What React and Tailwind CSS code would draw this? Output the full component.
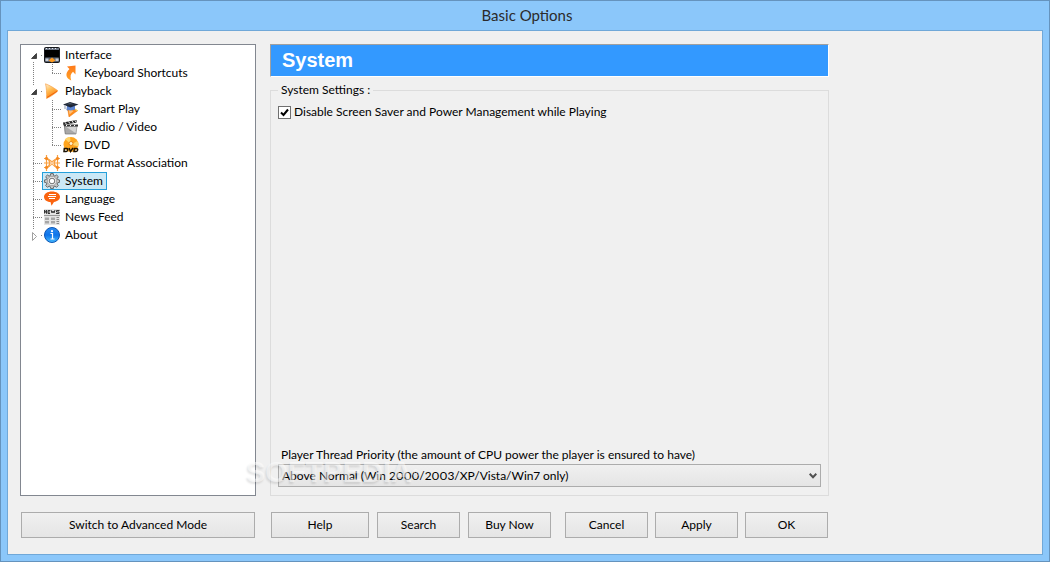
import { useState } from "react";
import clsx from "clsx";

const TREE = [
  { id: "interface", label: "Interface", icon: InterfaceIcon, open: true, children: [{ id: "shortcuts", label: "Keyboard Shortcuts", icon: ShortcutIcon }] },
  {
    id: "playback",
    label: "Playback",
    icon: PlaybackIcon,
    open: true,
    children: [
      { id: "smart", label: "Smart Play", icon: SmartPlayIcon },
      { id: "av", label: "Audio / Video", icon: ClapperIcon },
      { id: "dvd", label: "DVD", icon: DvdIcon },
    ],
  },
  { id: "formats", label: "File Format Association", icon: FormatIcon },
  { id: "system", label: "System", icon: GearIcon },
  { id: "language", label: "Language", icon: LanguageIcon },
  { id: "news", label: "News Feed", icon: NewsIcon },
  { id: "about", label: "About", icon: AboutIcon, open: false },
];

const PRIORITIES = ["Above Normal (Win 2000/2003/XP/Vista/Win7 only)", "Normal", "High"];

function InterfaceIcon() {
  return (
    <svg viewBox="0 0 16 16" className="size-4 shrink-0">
      <rect width="16" height="16" rx="2" fill="#15171b" />
      <rect x="1" y="1" width="14" height="2" fill="#6d7685" />
      <rect x="1" y="3" width="14" height="7" fill="#000" />
      <rect x="1" y="10.5" width="14" height="4.5" rx="1" fill="#5b626e" />
      <path d="M1.500 11.500h3v2.500h-3zM11.500 11.500h3v2.500h-3z" fill="#c3cad6" />
      <path d="M4.500 13.500 8 10.500l3.500 3L8 15.500z" fill="#ff9a1f" />
      <path d="M2 1.500h1M5 1.500h1M8 1.500h1M11 1.500h1" stroke="#e4e8ee" />
    </svg>
  );
}

function ShortcutIcon() {
  return (
    <svg viewBox="0 0 16 16" className="size-4 shrink-0">
      <defs>
        <linearGradient id="arrowFill" x1="0" y1="0" x2="0" y2="1">
          <stop offset="0" stopColor="#ff7a1a" />
          <stop offset="1" stopColor="#ffa126" />
        </linearGradient>
      </defs>
      <path d="M4 1.500 12.500.5 12.500 9.500 10 6.800C7.500 8.800 7 11.500 8.200 15.500 3 13.500 1.500 8.500 6.500 4z" fill="url(#arrowFill)" />
    </svg>
  );
}

function PlaybackIcon() {
  return (
    <svg viewBox="0 0 16 16" className="size-4 shrink-0">
      <defs>
        <linearGradient id="playFill" x1="0" y1="0" x2="0.500" y2="1">
          <stop offset="0" stopColor="#fff3d8" />
          <stop offset="0.450" stopColor="#ffc05a" />
          <stop offset="1" stopColor="#ff7900" />
        </linearGradient>
      </defs>
      <path d="M1.500.8C6 2.500 10 5 14 7.800 10 11.500 6.500 13.700 2.500 15.500 2.800 10 2.500 5 1.500.8z" fill="url(#playFill)" stroke="#f9a44c" strokeWidth="0.700" />
      <path d="m3 14.500 10-6.200" stroke="#f0640c" strokeWidth="1" />
    </svg>
  );
}

function SmartPlayIcon() {
  return (
    <svg viewBox="0 0 16 16" className="size-4 shrink-0">
      <path d="M4 5 3.500 9c3 2 6 1.500 8.500-.5V5z" fill="#4a70bd" />
      <path d="M4.500 6.500 14 10l-8 6z" fill="#ff8c1a" stroke="#e87208" strokeWidth="0.500" />
      <path d="m5.500 8 1 5.500 4-3.500z" fill="#ffc078" />
      <path d="M4 5.500v3c3 1.500 6 1 8-.5V5z" fill="#5b84d0" />
      <path d="M0 3.500 7 1l8.500 2.500L7.500 6.500z" fill="#1f2736" />
      <path d="m3 3.300 4-1.200 4 1.200z" fill="#56606f" />
      <path d="M2 4v4" stroke="#8f9bb0" />
      <path d="m12 8 3 2" stroke="#f3c431" />
    </svg>
  );
}

function ClapperIcon() {
  return (
    <svg viewBox="0 0 16 16" className="size-4 shrink-0">
      <path d="M1 6.500h13.500l-1 8.500H2z" fill="#a9a9a9" />
      <path d="M2.500 7.500h11L12.500 14z" fill="#d4d4d4" />
      <path d="M0 3.500 13.500 1l.5 2.500L.5 6z" fill="#262626" />
      <path d="M.5 5.500h14.500v2H1z" fill="#333" />
      <path d="m2 3.300 1.500 2M5.500 2.600l1.500 2M9 2l1.500 2M12 1.500l1.500 2M3 7.300l1-1.600M7 7.300l1-1.600M11 7.300l1-1.600" stroke="#fff" />
      <path d="M1.500 8 2.300 15H13" stroke="#777" fill="none" strokeWidth="0.700" />
    </svg>
  );
}

function DvdIcon() {
  return (
    <svg viewBox="0 0 16 16" className="size-4 shrink-0">
      <circle cx="8" cy="7.500" r="7.500" fill="#ffa51e" />
      <path d="M8 7.500 2 2A7.500 7.500 0 0 1 7 .1zM8 7.500l7.300 2A7.500 7.500 0 0 0 14.500 4z" fill="#ffd36a" />
      <circle cx="8" cy="6.500" r="2" fill="#fff3cc" stroke="#ea8411" />
      <g fill="none" stroke="#1a1204" strokeWidth="1.500">
        <path d="M1.300 11.500h2.500c1.500 0 1.300 3-.6 3H1z" />
        <path d="m6 11 1.500 3.500L10 11" />
        <path d="M11.300 11.500h2.200c1.800 0 1.500 3-.5 3h-2z" />
      </g>
    </svg>
  );
}

function FormatIcon() {
  return (
    <svg viewBox="0 0 16 16" className="size-4 shrink-0" fill="none" stroke="#f9a040" strokeWidth="1.200">
      <path d="M2.500 0v16M13.500 0v16M0 3.500h3C5 3.500 6 6.500 8 6.500s3-3 5-3h3M0 12.500h3C5 12.500 6 9.500 8 9.500s3 3 5 3h3M0 8h16" />
      <path d="M3 3.500c3.500 2 3.500 7 0 9M13 3.500c-3.500 2-3.500 7 0 9" />
      <path d="M1.500 2.500h2v2h-2zM12.500 2.500h2v2h-2zM1.500 11.500h2v2h-2zM12.500 11.500h2v2h-2z" fill="#f58a1f" stroke="#f07a10" strokeWidth="0.500" />
    </svg>
  );
}

function GearIcon() {
  return (
    <svg viewBox="0 0 16 16" className="size-4 shrink-0">
      <g fill="#c4c4c4" stroke="#606060" strokeWidth="0.900">
        <path d="M6.700.6h2.600l.4 2 1.200.5L12.600 2l1.700 1.700-1.100 1.700.5 1.200 1.900.4v2.300l-1.900.4-.5 1.200 1.100 1.700-1.700 1.700-1.700-1.100-1.200.5-.4 1.900H6.700l-.4-1.900-1.200-.5-1.700 1.100-1.700-1.700 1.100-1.700-.5-1.200L.4 9.300V7l1.900-.4.5-1.200-1.100-1.700L3.400 2l1.700 1.100 1.200-.5z" />
        <circle cx="8" cy="8" r="4.600" fill="#ececec" strokeWidth="0.400" />
        <circle cx="8" cy="8" r="2.800" fill="#fff" />
      </g>
    </svg>
  );
}

function LanguageIcon() {
  return (
    <svg viewBox="0 0 16 16" className="size-4 shrink-0">
      <path d="M8 .5c4.500 0 8 2.200 8 5.300 0 2.700-2.500 4.700-6 5.200L7.500 14.700l-1-3.600C2.500 10.900 0 8.700 0 5.800 0 2.700 3.500.5 8 .5z" fill="#fa6410" />
      <path d="M5 3.500h7M4 5.500h8M5 7.500h6" stroke="#fff" />
    </svg>
  );
}

function NewsIcon() {
  return (
    <svg viewBox="0 0 16 16" className="size-4 shrink-0">
      <path d="M0 0h16v16H0z" fill="#e4e4e4" />
      <path d="M.5 4.500V1l2 3.500V1M6 1.500H4v3h2M4 3h2M7 1l1 3 1-2 1 2 1-3M15.500 1.500h-3V3h2.500v1.500h-3" stroke="#353535" strokeWidth="1" fill="none" />
      <path d="M0 6.500h16" stroke="#9a9a9a" />
      <path d="M1 8.500h4v6H1zM7 8.500h4v6H7z" fill="#a7a7a7" />
      <path d="M1 11.500h4M7 11.500h4" stroke="#e4e4e4" />
      <path d="M12.500 8.500H15M12.500 10.500H15M12.500 12.500H15M12.500 14.500H15" stroke="#8a8a8a" />
    </svg>
  );
}

function AboutIcon() {
  return (
    <svg viewBox="0 0 16 16" className="size-4 shrink-0">
      <defs>
        <linearGradient id="aboutFill" x1="0" y1="0" x2="0" y2="1">
          <stop offset="0" stopColor="#2c8cf0" />
          <stop offset="0.500" stopColor="#0f74ea" />
          <stop offset="1" stopColor="#45bbff" />
        </linearGradient>
      </defs>
      <circle cx="8" cy="8" r="7.500" fill="url(#aboutFill)" stroke="#0c55b5" />
      <circle cx="8" cy="4.200" r="1.100" fill="#fff" />
      <path d="M6.500 6.500h2v5M6.500 12h4" stroke="#fff" strokeWidth="1.200" fill="none" />
    </svg>
  );
}

// Dotted connector left of a top level item. x=12 is the trunk.
function RootBranch({ first, last, toggle, open }) {
  return (
    <svg viewBox="0 0 21 18" className="h-[18px] w-[21px] shrink-0" fill="none" stroke="#808080" strokeDasharray="1 1" shapeRendering="crispEdges">
      {!first && <path d={toggle ? "M12.500 0v4" : "M12.500 0v9"} />}
      {!last && <path d={toggle ? "M12.500 16v2" : "M12.500 10v8"} />}
      <path d={toggle ? "M20 9.500h1" : "M12 9.500h9"} />
      {toggle && open && <path d="M15.500 7.500v5h-5z" fill="#404040" stroke="#202020" strokeWidth="0.700" strokeDasharray="none" shapeRendering="auto" />}
      {toggle && !open && <path d="M11.500 6.500v8l4-4z" fill="#fff" stroke="#a0a0a0" strokeDasharray="none" shapeRendering="auto" />}
    </svg>
  );
}

function ChildBranch({ last }) {
  return (
    <svg viewBox="0 0 40 18" className="h-[18px] w-10 shrink-0" fill="none" stroke="#808080" strokeDasharray="1 1" shapeRendering="crispEdges">
      <path d="M12.500 0v18" />
      <path d={last ? "M31.500 0v10" : "M31.500 0v18"} />
      <path d="M31 9.500h10" />
    </svg>
  );
}

function TreeLabel({ item, selected, onSelect }) {
  const Icon = item.icon;
  return (
    <button
      type="button"
      onClick={() => onSelect(item.id)}
      className={clsx(
        "flex h-[18px] items-center gap-[5px] border px-px pr-[3px] whitespace-nowrap",
        selected ? "border-[#26a0da] bg-[#cbe8f6]" : "border-transparent",
      )}
    >
      <Icon />
      {item.label}
    </button>
  );
}

function OptionsTree({ selectedId, onSelect }) {
  const [closed, setClosed] = useState({});

  return (
    <nav aria-label="Options" className="w-[236px] shrink-0 border border-[#828790] bg-white pt-px">
      <ul>
        {TREE.map((item, index) => {
          const open = item.open && !closed[item.id];
          return (
            <li key={item.id}>
              <div className="flex" onDoubleClick={() => setClosed((current) => ({ ...current, [item.id]: !current[item.id] }))}>
                <RootBranch first={index === 0} last={index === TREE.length - 1} toggle={item.open !== undefined} open={open} />
                <TreeLabel item={item} selected={selectedId === item.id} onSelect={onSelect} />
              </div>
              {open && (
                <ul>
                  {item.children.map((child, childIndex) => (
                    <li key={child.id} className="flex">
                      <ChildBranch last={childIndex === item.children.length - 1} />
                      <TreeLabel item={child} selected={selectedId === child.id} onSelect={onSelect} />
                    </li>
                  ))}
                </ul>
              )}
            </li>
          );
        })}
      </ul>
    </nav>
  );
}

function DialogButton({ className, children }) {
  return (
    <button type="button" className={clsx("h-[26px] border border-[#acacac] bg-linear-to-b from-[#f0f0f0] to-[#e5e5e5]", className)}>
      {children}
    </button>
  );
}

export default function App() {
  const [selectedId, setSelectedId] = useState("system");
  const [disableSaver, setDisableSaver] = useState(true);
  const [priority, setPriority] = useState(PRIORITIES[0]);

  return (
    <div className="flex h-screen flex-col border border-[#6593bd] bg-[#8bc7fa] px-1.5 pb-1.5 font-['Lato','Open_Sans',sans-serif] text-[12px] leading-[18px] text-black">
      <h1 className="h-[29px] shrink-0 pl-1 text-center text-[15px] leading-[29px] text-[#2b2b2b]">Basic Options</h1>
      <div className="flex flex-1 flex-col gap-4 border border-[#70a8d8] bg-[#f0f0f0] px-3 pt-[13px] pb-4">
        <div className="flex flex-1 gap-3.5">
          <OptionsTree selectedId={selectedId} onSelect={setSelectedId} />
          <main className="relative flex max-w-[559px] flex-1 flex-col gap-1">
            <h2 className="h-[33px] border border-t-[#a0a0a0] border-r-white border-b-white border-l-[#a0a0a0] bg-[#3399ff] px-[11px] font-['Liberation_Sans',sans-serif] text-[20px] leading-[31px] font-bold text-white">
              System
            </h2>
            <fieldset className="flex flex-1 flex-col justify-between border border-[#dcdcdc] px-[7px] pb-2">
              <legend className="px-[3px]">System Settings :</legend>
              <label className="flex items-center gap-[3px] pt-1">
                <span className="relative flex size-[13px]">
                  <input
                    type="checkbox"
                    checked={disableSaver}
                    onChange={(event) => setDisableSaver(event.target.checked)}
                    className="size-[13px] appearance-none border border-[#707070] bg-white"
                  />
                  {disableSaver && (
                    <svg viewBox="0 0 13 13" className="pointer-events-none absolute inset-0" fill="none" stroke="#000" strokeWidth="2">
                      <path d="M3 6.500 5.500 9 10 3.500" />
                    </svg>
                  )}
                </span>
                Disable Screen Saver and Power Management while Playing
              </label>
              <div>
                <label htmlFor="priority" className="block px-[3px]">
                  Player Thread Priority (the amount of CPU power the player is ensured to have)
                </label>
                <div className="relative">
                  <select
                    id="priority"
                    value={priority}
                    onChange={(event) => setPriority(event.target.value)}
                    className="block h-[23px] w-full appearance-none border border-[#acacac] bg-linear-to-b from-[#f0f0f0] to-[#e5e5e5] px-[3px] proportional-nums"
                  >
                    {PRIORITIES.map((item) => (
                      <option key={item}>{item}</option>
                    ))}
                  </select>
                  <svg viewBox="0 0 8 6" className="pointer-events-none absolute top-[9px] right-1 h-1.5 w-2" fill="none" stroke="#505050" strokeWidth="2">
                    <path d="m.7.8 3.300 3.400L7.300.8" />
                  </svg>
                </div>
              </div>
            </fieldset>
            <span className="pointer-events-none absolute bottom-2 -left-6 font-['Liberation_Sans',sans-serif] text-[29px] leading-[32px] font-bold text-white/50 [text-shadow:-1px_2px_2px_rgb(0_0_0/0.1)]">
              SOFTPEDIA<sup className="text-[10px]">®</sup>
            </span>
          </main>
        </div>
        <div className="flex gap-4 px-px">
          <DialogButton className="w-[234px]">Switch to Advanced Mode</DialogButton>
          <div className="flex max-w-[557px] flex-1 justify-between">
            <div className="flex gap-2">
              <DialogButton className="w-[98px]">Help</DialogButton>
              <DialogButton className="w-[83px]">Search</DialogButton>
              <DialogButton className="w-[83px]">Buy Now</DialogButton>
            </div>
            <div className="flex gap-[7px]">
              <DialogButton className="w-[83px]">Cancel</DialogButton>
              <DialogButton className="w-[83px]">Apply</DialogButton>
              <DialogButton className="w-[83px]">OK</DialogButton>
            </div>
          </div>
        </div>
      </div>
    </div>
  );
}
